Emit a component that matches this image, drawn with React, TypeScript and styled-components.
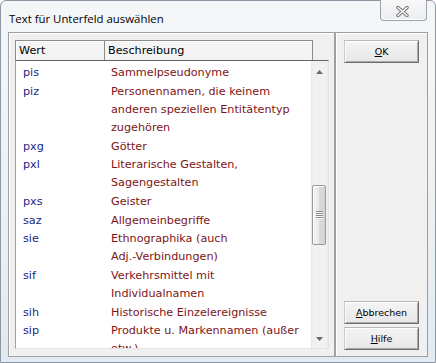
import React from 'react'
import styled, { createGlobalStyle } from 'styled-components'

const GlobalStyle = createGlobalStyle`
  html, body {
    margin: 0;
    padding: 0;
    background: #ffffff;
  }
  body {
    width: 436px;
    height: 363px;
    overflow: hidden;
  }
`

const LIST_FONT = `'DejaVu Sans', Verdana, sans-serif`

type Entry = { code: string; text: string }

const entries: Entry[] = [
  { code: 'pis', text: 'Sammelpseudonyme' },
  { code: 'piz', text: 'Personennamen, die keinem\nanderen speziellen Entitätentyp\nzugehören' },
  { code: 'pxg', text: 'Götter' },
  { code: 'pxl', text: 'Literarische Gestalten,\nSagengestalten' },
  { code: 'pxs', text: 'Geister' },
  { code: 'saz', text: 'Allgemeinbegriffe' },
  { code: 'sie', text: 'Ethnographika (auch\nAdj.-Verbindungen)' },
  { code: 'sif', text: 'Verkehrsmittel mit\nIndividualnamen' },
  { code: 'sih', text: 'Historische Einzelereignisse' },
  { code: 'sip', text: 'Produkte u. Markennamen (außer\netw.)' },
]

const Window = styled.div`
  box-sizing: border-box;
  width: 436px;
  height: 363px;
  display: flex;
  flex-direction: column;
  padding: 0 7px 5px 7px;
  border: 1px solid #8e98a4;
  border-radius: 6px 6px 0 0;
  background: linear-gradient(to bottom, #f5f6f8 0%, #eef1f4 55%, #e1eaf0 100%);
`

const TitleBar = styled.div`
  display: flex;
  justify-content: space-between;
  align-items: flex-start;
  height: 31px;
  flex-shrink: 0;
`

const Title = styled.div`
  margin: 10px 0 0 1px;
  font-family: 'Open Sans', 'Noto Sans', sans-serif;
  font-size: 11.4px;
  line-height: 16px;
  color: #000000;
`

const CloseButton = styled.div`
  box-sizing: border-box;
  width: 47px;
  height: 21px;
  margin: -1px 1px 0 0;
  display: flex;
  align-items: center;
  justify-content: center;
  padding: 2px 3px 0 0;
  border: 1px solid #9da3aa;
  border-top: none;
  border-radius: 0 0 4px 4px;
  background: linear-gradient(to bottom, #f8f8f9 0%, #eceef1 100%);
  box-shadow: inset 0 -1px 0 #ffffff;
`

const Client = styled.div`
  flex: 1;
  display: flex;
  min-height: 0;
  background: #f0f0f0;
`

const Panel = styled.div<{ grow?: boolean }>`
  box-sizing: border-box;
  display: flex;
  flex-direction: column;
  border: 1px solid #a0a0a0;
  box-shadow: inset 1px 1px 0 #ffffff;
  ${({ grow }) => (grow ? 'flex: 1;' : 'width: 328px;')}
`

const ListPanel = styled(Panel)`
  padding: 7px 5px 7px 6px;
`

const ButtonPanel = styled(Panel)`
  padding: 7px 8px 6px 8px;
  gap: 3px;
`

const ListFrame = styled.div`
  flex: 1;
  display: flex;
  flex-direction: column;
  min-height: 0;
  font-family: ${LIST_FONT};
  font-size: 11.2px;
`

const Header = styled.div`
  box-sizing: border-box;
  width: 298px;
  height: 20px;
  display: flex;
  border: 1px solid #8c8c8c;
  border-bottom: none;
  background: #f4f4f4;
  box-shadow: inset 1px 1px 0 #ffffff;
`

const HeaderCell = styled.div<{ width?: number }>`
  box-sizing: border-box;
  ${({ width }) => (width ? `width: ${width}px;` : 'flex: 1;')}
  padding-left: 3px;
  line-height: 19px;
  color: #000000;
  border-right: ${({ width }) => (width ? '1px solid #8c8c8c' : 'none')};
  white-space: nowrap;
`

const Body = styled.div`
  flex: 1;
  display: flex;
  min-height: 0;
  border-top: 1px solid #646464;
  border-left: 1px solid #a0a0a0;
  border-bottom: 1px solid #e3e3e3;
  border-right: 1px solid #e3e3e3;
  background: #ffffff;
`

const Rows = styled.div`
  flex: 1;
  padding-top: 3px;
  overflow: hidden;
`

const Row = styled.div`
  display: flex;
  padding: 0.33px 0;
  line-height: 18px;
`

const Code = styled.div`
  box-sizing: border-box;
  width: 88px;
  padding-left: 7px;
  color: #1a1f86;
`

const Desc = styled.div`
  flex: 1;
  padding-left: 7px;
  color: #7d1416;
  white-space: pre-line;
`

const ScrollBar = styled.div`
  width: 17px;
  display: flex;
  flex-direction: column;
  background: linear-gradient(to right, #e4e4e4 0px, #f1f1f1 2px, #f1f1f1 15px, #e9e9e9 17px);
`

const ScrollArrow = styled.div<{ size: number }>`
  height: ${({ size }) => size}px;
  display: flex;
  align-items: center;
  justify-content: center;
  flex-shrink: 0;
`

const Track = styled.div`
  flex: 1;
`

const Thumb = styled.div<{ offset: number }>`
  box-sizing: border-box;
  height: 60px;
  margin: ${({ offset }) => offset}px 2px 0 1px;
  display: flex;
  align-items: center;
  justify-content: center;
  border: 1px solid #9a9a9a;
  border-radius: 2px;
  background: linear-gradient(to right, #f4f4f4 0%, #e9e9e9 50%, #dadada 51%, #d3d3d3 100%);
  box-shadow: inset 1px 1px 0 #ffffff;
`

const Grip = styled.div`
  width: 7px;
  height: 8px;
  background: repeating-linear-gradient(to bottom, #8a8a8a 0px, #8a8a8a 1px, #f8f8f8 1px, #f8f8f8 2px);
`

const Button = styled.button<{ push?: boolean }>`
  box-sizing: border-box;
  width: 75px;
  height: 23px;
  padding: 0;
  flex-shrink: 0;
  ${({ push }) => (push ? 'margin-top: auto;' : '')}
  font-family: ${LIST_FONT};
  font-size: 9.5px;
  color: #000000;
  background: linear-gradient(to bottom, #f4f4f4 0%, #eeeeee 50%, #e7e7e7 100%);
  border: 1px solid;
  border-color: #b9b9b9 #6e6e6e #6e6e6e #c9c9c9;
  box-shadow: inset 1px 1px 0 #ffffff, inset -1px -1px 0 #a9a9a9;

  u {
    text-underline-offset: 1px;
  }
`

function Arrow({ down }: { down?: boolean }) {
  return (
    <svg width="7" height="4" viewBox="0 0 7 4">
      <path d={down ? 'M0 0 L7 0 L3.5 4 Z' : 'M0 4 L7 4 L3.5 0 Z'} fill="#6a6a6a" />
    </svg>
  )
}

function CloseIcon() {
  return (
    <svg width="13" height="11" viewBox="0 0 13 11">
      <path d="M2 1.5 L11 9.5 M11 1.5 L2 9.5" stroke="#747474" strokeWidth="3.4" strokeLinecap="round" />
      <path d="M2 1.5 L11 9.5 M11 1.5 L2 9.5" stroke="#ffffff" strokeWidth="1.5" strokeLinecap="round" />
    </svg>
  )
}

export default function App() {
  return (
    <>
      <GlobalStyle />
      <Window>
        <TitleBar>
          <Title>Text für Unterfeld auswählen</Title>
          <CloseButton>
            <CloseIcon />
          </CloseButton>
        </TitleBar>
        <Client>
          <ListPanel>
            <ListFrame>
              <Header>
                <HeaderCell width={89}>Wert</HeaderCell>
                <HeaderCell>Beschreibung</HeaderCell>
              </Header>
              <Body>
                <Rows>
                  {entries.map(e => (
                    <Row key={e.code}>
                      <Code>{e.code}</Code>
                      <Desc>{e.text}</Desc>
                    </Row>
                  ))}
                </Rows>
                <ScrollBar>
                  <ScrollArrow size={22}>
                    <Arrow />
                  </ScrollArrow>
                  <Track>
                    <Thumb offset={102}>
                      <Grip />
                    </Thumb>
                  </Track>
                  <ScrollArrow size={18}>
                    <Arrow down />
                  </ScrollArrow>
                </ScrollBar>
              </Body>
            </ListFrame>
          </ListPanel>
          <ButtonPanel grow>
            <Button>
              <u>O</u>K
            </Button>
            <Button push>
              <u>A</u>bbrechen
            </Button>
            <Button>
              <u>H</u>ilfe
            </Button>
          </ButtonPanel>
        </Client>
      </Window>
    </>
  )
}
